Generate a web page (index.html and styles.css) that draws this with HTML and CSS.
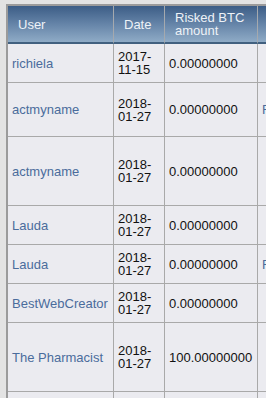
FILE: index.html
```html
<!DOCTYPE html>
<html>
<head>
<meta charset="utf-8">
<link rel="stylesheet" href="styles.css">
</head>
<body>
<table class="grid">
  <colgroup>
    <col class="c-user">
    <col class="c-date">
    <col class="c-amt">
    <col class="c-more">
  </colgroup>
  <thead>
    <tr>
      <th>User</th>
      <th>Date</th>
      <th>Risked BTC amount</th>
      <th>Result</th>
    </tr>
  </thead>
  <tbody>
    <tr class="r39">
      <td><a href="#">richiela</a></td>
      <td>2017-11-15</td>
      <td>0.00000000</td>
      <td></td>
    </tr>
    <tr class="r54">
      <td><a href="#">actmyname</a></td>
      <td>2018-01-27</td>
      <td>0.00000000</td>
      <td><a href="#">Fail</a></td>
    </tr>
    <tr class="r69">
      <td><a href="#">actmyname</a></td>
      <td>2018-01-27</td>
      <td>0.00000000</td>
      <td></td>
    </tr>
    <tr class="r39">
      <td><a href="#">Lauda</a></td>
      <td>2018-01-27</td>
      <td>0.00000000</td>
      <td></td>
    </tr>
    <tr class="r39">
      <td><a href="#">Lauda</a></td>
      <td>2018-01-27</td>
      <td>0.00000000</td>
      <td><a href="#">Fail</a></td>
    </tr>
    <tr class="r39">
      <td><a href="#">BestWebCreator</a></td>
      <td>2018-01-27</td>
      <td>0.00000000</td>
      <td></td>
    </tr>
    <tr class="r69">
      <td><a href="#">The Pharmacist</a></td>
      <td>2018-01-27</td>
      <td>100.00000000</td>
      <td></td>
    </tr>
    <tr class="r39">
      <td><a href="#">Lauda</a></td>
      <td>2018-01-28</td>
      <td>0.00000000</td>
      <td></td>
    </tr>
  </tbody>
</table>
</body>
</html>
```

FILE: styles.css
```css
html, body {
  margin: 0;
  overflow: hidden;
}
body {
  background: #e3e3e3;
  padding: 4px 0 0 6px;
  font-family: "Liberation Sans", Arial, sans-serif;
  font-size: 13px;
  line-height: 13px;
}
.grid {
  table-layout: fixed;
  width: 372px;
  border-collapse: separate;
  border-spacing: 0;
  border-left: 2px solid #9b9b9b;
  border-top: 2px solid #9b9b9b;
  background: #ebebf0;
}
.c-user { width: 106px; }
.c-date { width: 51px; }
.c-amt { width: 93px; }
.c-more { width: 120px; }

.grid th {
  box-sizing: border-box;
  height: 38px;
  padding: 0 4px 0 10px;
  text-align: left;
  font-weight: normal;
  color: #eef2f7;
  background: linear-gradient(to bottom, #3c5d86 0%, #6584a8 50%, #8fabc6 100%);
  border-right: 1px solid #a5a9ae;
  border-bottom: 2px solid #41607f;
  vertical-align: middle;
}
.grid td {
  box-sizing: border-box;
  padding: 6px 4px;
  color: #111;
  border-right: 1px solid #a9a9a9;
  border-bottom: 1px solid #a9a9a9;
  vertical-align: middle;
  overflow: hidden;
}
.grid a {
  color: #4a6c9c;
  text-decoration: none;
}
.r39 td { height: 39px; }
.r54 td { height: 54px; }
.r69 td { height: 69px; }
```
